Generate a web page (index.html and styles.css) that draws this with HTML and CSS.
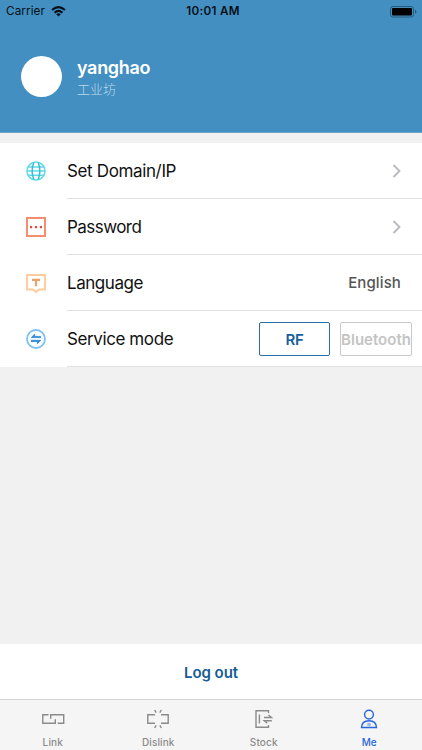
FILE: index.html
```html
<!DOCTYPE html>
<html lang="en">
<head>
<meta charset="utf-8">
<title>Me</title>
<link rel="stylesheet" href="styles.css">
</head>
<body>
<div class="screen">
  <header class="header">
    <div class="status">
      <div class="carrier"><span>Carrier</span>
        <svg width="15" height="11" viewBox="0 0 15 11" fill="none" stroke="#071018" stroke-width="2"><path d="M1 4Q7.5-1.8 14 4M3.5 6.7Q7.5 3.1 11.5 6.7"/><path d="M5.2 8.2Q7.5 6.4 9.8 8.2L7.5 10.6Z" fill="#071018" stroke="none"/></svg>
      </div>
      <time class="time">10:01 AM</time>
      <svg class="battery" width="27" height="12" viewBox="0 0 27 12"><rect x=".5" y=".5" width="23" height="10.5" rx="2.3" fill="none" stroke="#285b7b"/><rect x="2" y="2" width="20" height="7.5" rx="1" fill="#000"/><path d="M25 3.8Q26.5 4.3 26.5 5.7T25 7.6Z" fill="#285b7b"/></svg>
    </div>
    <div class="profile">
      <div class="avatar"></div>
      <div><div class="name">yanghao</div><div class="org">工业坊</div></div>
    </div>
  </header>
  <main class="list">
    <div class="row">
      <svg class="icon" viewBox="0 0 20 20" fill="none" stroke="#62d9e8" stroke-width="1.5"><circle cx="10" cy="10" r="9"/><path d="M2 6H18M1 10H19M2 14.3H18"/><path d="M7.8 1.5Q4.5 10 7.8 18.5M12.2 1.5Q15.5 10 12.2 18.5" stroke="#35bdd0"/></svg>
      <div class="cell"><span class="label domain">Set Domain/IP</span><svg class="chevron" viewBox="0 0 10 14"><path d="M1.5 1 7.5 7 1.5 13"/></svg></div>
    </div>
    <div class="row">
      <svg class="icon" viewBox="0 0 20 20" fill="none"><rect x="1" y="1" width="18" height="18" stroke="#f58d70" stroke-width="2"/><path d="M4 9h2.2v2.2H4zM8.9 9h2.2v2.2H8.9zM13.8 9H16v2.2h-2.2z" fill="#dc5037"/></svg>
      <div class="cell"><span class="label password">Password</span><svg class="chevron" viewBox="0 0 10 14"><path d="M1.5 1 7.5 7 1.5 13"/></svg></div>
    </div>
    <div class="row">
      <svg class="icon" viewBox="0 0 20 20" fill="none"><path d="M1 2H19V16.5H13L10 19 7 16.5H1Z" stroke="#ffcb9c" stroke-width="1.9"/><path d="M6 6.9H14M10 6.9V13.3" stroke="#eba268" stroke-width="2.2"/></svg>
      <div class="cell"><span class="label language">Language</span><span class="value">English</span></div>
    </div>
    <div class="row">
      <svg class="icon" viewBox="0 0 20 20" fill="none"><circle cx="10" cy="10" r="9" stroke="#7dc1f5" stroke-width="1.8"/><path d="M15 8.6H5.2L8.7 5.2V7.4H15M5 11.3H14.8L11.3 14.7V12.5H5" fill="#2989d8" stroke="#2989d8" stroke-width=".8"/></svg>
      <div class="cell"><span class="label service">Service mode</span><div class="modes"><button class="mode mode-active">RF</button><button class="mode mode-bt"><span>Bluetooth</span></button></div></div>
    </div>
  </main>
  <button class="logout">Log out</button>
  <nav class="tabs">
    <div class="tab"><svg viewBox="0 0 24 20"><path d="M7.5 5.7H1.8V14.2H14.3V10.2M9.7 9.8V5.7H22.7V14.2H16.7"/></svg><span class="link">Link</span></div>
    <div class="tab"><svg viewBox="0 0 24 20"><path d="M9 5.8H1.8V14.2H9M15 5.8H22.2V14.2H15M8.6 1 10.2 3.7M15.4 1 13.8 3.7M10.2 16.3 8.6 19M13.8 16.3 15.4 19"/></svg><span class="dislink">Dislink</span></div>
    <div class="tab"><svg viewBox="0 0 24 20"><path d="M16.5 4V1.7H4V18.3H16.5V16M7.4 5.5V14.5M12 8.5H19.5L16.5 6M19.8 11.8H12.3L15.3 14.2"/></svg><span class="stock">Stock</span></div>
    <div class="tab tab-active"><svg viewBox="0 0 24 20"><circle cx="12" cy="5.6" r="4.4"/><path d="M4.5 18.5Q4.8 11.8 12 11.8T19.5 18.5Z"/><circle cx="12" cy="15.4" r="2" class="dot"/></svg><span class="me">Me</span></div>
  </nav>
</div>
</body>
</html>
```
FILE: styles.css
```css
* { box-sizing: border-box; }
body { margin: 0; font-family: Inter, "Noto Sans CJK SC", sans-serif; }
button { font: inherit; background: none; border: 0; padding: 0; }
svg { display: block; flex: none; }
.screen { width: 422px; height: 750px; display: flex; flex-direction: column; background: #f1f1f1; overflow: hidden; }
.header { height: 133px; flex: none; background: #438fc1; border-bottom: 1px solid #6ba4c8; }
.status { height: 22px; display: grid; grid-template-columns: 1fr auto 1fr; align-items: center; padding: 0 5px 0 6px; color: #071018; font-size: 11.7px; line-height: 23px; }
.carrier { display: flex; align-items: center; gap: 6px; }
.carrier span { letter-spacing: .1px; }
.time { font-weight: 600; letter-spacing: .3px; padding-left: 3px; }
.battery { justify-self: end; }
.profile { display: flex; align-items: center; gap: 15px; padding: 33px 0 0 21px; color: #fff; }
.avatar { width: 41px; height: 41px; border-radius: 50%; background: #fff; }
.name { font-size: 18px; font-weight: 600; line-height: 24px; letter-spacing: -.32px; padding-top: 1px; }
.org { font-size: 13px; line-height: 17px; font-weight: 300; color: #b9d8eb; font-family: "Noto Sans CJK SC", sans-serif; }
.list { margin-top: 10px; background: #fff; }
.row { height: 56px; display: flex; align-items: center; padding-left: 26px; }
.icon { width: 20px; height: 20px; margin-right: 21px; margin-top: -1px; }
.cell { flex: 1; height: 56px; display: flex; align-items: center; justify-content: space-between; border-bottom: 1px solid #e2e2e2; padding-right: 20px; }
.label { font-size: 17px; color: #111; padding-top: 1px; }
.domain { letter-spacing: -.36px; }
.password { letter-spacing: -.55px; }
.language { letter-spacing: -.45px; }
.service { letter-spacing: -.4px; }
.chevron { width: 10px; height: 14px; fill: none; stroke: #b9b9bd; stroke-width: 1.8; }
.value { font-size: 15px; font-weight: 500; color: #555; padding-right: 1px; letter-spacing: .12px; }
.modes { display: flex; gap: 10px; margin-right: -10px; }
.mode { width: 71px; height: 34px; border: 1px solid #c9c9c9; border-radius: 2px; color: #c4c4c4; font-size: 15px; font-weight: 600; display: flex; align-items: center; justify-content: center; padding-top: 1px; }
.mode-bt { width: 72px; }
.mode-active { border-color: #2b6eaa; color: #17609f; letter-spacing: -.4px; }
.logout { height: 55px; margin-top: auto; background: #fff; color: #145c94; font-size: 15px; font-weight: 600; letter-spacing: -.05px; padding-top: 1px; }
.tabs { height: 51px; flex: none; display: grid; grid-template-columns: repeat(4, 1fr); border-top: 1px solid #d4d4d4; background: #f5f5f5; }
.tab { display: flex; flex-direction: column; align-items: center; padding-top: 9px; color: #8b8b8b; font-size: 10px; font-weight: 500; line-height: 14px; letter-spacing: .12px; }
.tab svg { width: 24px; height: 20px; margin-bottom: 6px; fill: none; stroke: currentColor; stroke-width: 1.4; }
.tab-active { color: #2866dc; }
.tab .dot { fill: #9bb9f2; stroke: none; }
```
